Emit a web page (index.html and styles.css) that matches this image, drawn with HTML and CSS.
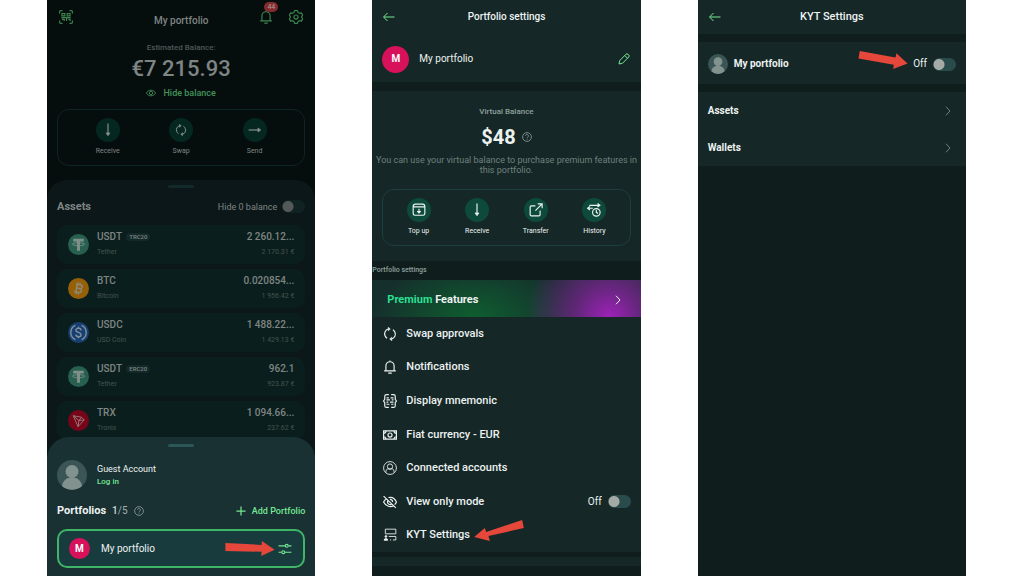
FILE: index.html
```html
<!DOCTYPE html>
<html lang="en">
<head>
    <meta charset="UTF-8">
    <meta name="viewport" content="width=device-width, initial-scale=1.0">
    <title>KYT Settings</title>
    <link rel="stylesheet" href="styles.css">
</head>
<body>
    <!-- Shared icons -->
    <svg class="sprite" aria-hidden="true">
        <symbol id="i-down" viewBox="0 0 24 24"><path d="M12 1v18" /><path d="M8.500 17h7L12 22z" fill="currentColor" stroke-width="1" /></symbol>
        <symbol id="i-right" viewBox="0 0 24 24"><path d="M1 12h18" /><path d="M17 8.500v7l5-3.500z" fill="currentColor" stroke-width="1" /></symbol>
        <symbol id="i-swap" viewBox="0 0 24 24"><path d="M9 3.500C4 5 1.500 10 3.500 15c.7 1.700 2 3.400 3.500 4.400M15 20.500c5-1.500 7.500-6.500 5.500-11.500-.7-1.700-2-3.400-3.500-4.400" /><path d="M9 .5v6l3.500-3zM15 17.500v6l-3.500-3z" fill="currentColor" stroke-width="1" /></symbol>
        <symbol id="i-bell" viewBox="0 0 24 24"><path d="M5 18v-8a7 7 0 0 1 14 0v8M2 18.500h20M9 22.500h6M12 1v2" /></symbol>
        <symbol id="i-back" viewBox="0 0 24 20"><path d="M23 10H2M9 2l-8 8 8 8" /></symbol>
        <symbol id="i-chevron" viewBox="0 0 12 20"><path d="M2 1.500l8 8.500-8 8.500" /></symbol>
        <symbol id="i-help" viewBox="0 0 24 24"><circle cx="12" cy="12" r="10.500" /><path d="M8.500 9.500a3.500 3.500 0 1 1 5.500 2.800c-1.300 1-2 1.500-2 3M12 17v1.500" /></symbol>
        <symbol id="i-user" viewBox="0 0 30 30"><circle cx="15" cy="15" r="15" fill="#3b5556" stroke="none" /><path d="M5 26c1-6 5-8.500 10-8.500S24 20 25 26a15 15 0 0 1-20 0z" fill="#82938f" stroke="none" /><circle cx="15" cy="11.500" r="6.500" fill="#82938f" stroke="none" /></symbol>
        <symbol id="i-tether" viewBox="0 0 24 24"><circle cx="12" cy="12" r="12" fill="#28604f" stroke="none" /><path d="M6 5.500h12v3.200h-4.300V19h-3.400V8.700H6z" fill="#7f8f8b" stroke="none" /><ellipse cx="12" cy="11.600" rx="7" ry="1.700" fill="none" stroke="#7f8f8b" stroke-width="1" /></symbol>
    </svg>

    <main class="screens">
        <section class="phone phone-home">
            <header class="home-bar">
                <button class="icon-btn" aria-label="Scan QR">
                    <svg class="icon icon-m" viewBox="0 0 24 24"><path d="M1 6V3q0-2 2-2h3M18 1h3q2 0 2 2v3M23 18v3q0 2-2 2h-3M6 23H3q-2 0-2-2v-3M5 6h5v4H5zM14 6h5v4h-5zM4 13h16M5 16h4v3M13 13v6M16 16h3v3" /></svg>
                </button>
                <h1>My portfolio</h1>
                <div class="home-tools">
                    <button class="icon-btn bell" aria-label="Notifications">
                        <svg class="icon icon-m"><use href="#i-bell" /></svg>
                        <span class="badge">44</span>
                    </button>
                    <button class="icon-btn" aria-label="Settings">
                        <svg class="icon icon-m" viewBox="0 0 24 24"><path d="M9.500 1h5l1 3.200 2.500 1.500 3.300-.8 2.200 4-2.200 3.100 2.200 3.100-2.200 4-3.300-.8-2.500 1.500-1 3.200h-5l-1-3.200L6 18.300l-3.300.8-2.200-4L2.700 12 .5 8.900l2.200-4 3.300.8 2.500-1.500z" stroke-linejoin="round" /><circle cx="12" cy="12" r="3.500" /></svg>
                    </button>
                </div>
            </header>

            <div class="balance">
                <p class="balance-label">Estimated Balance:</p>
                <p class="balance-sum">€7 215.93</p>
                <button class="hide-balance">
                    <svg class="icon icon-xs" viewBox="0 0 24 16"><path d="M1 8c4-9 18-9 22 0-4 9-18 9-22 0z" /><circle cx="12" cy="8" r="4" /></svg>
                    Hide balance
                </button>
            </div>

            <nav class="actions">
                <button class="action"><span class="action-dot"><svg class="icon icon-m"><use href="#i-down" /></svg></span>Receive</button>
                <button class="action"><span class="action-dot"><svg class="icon icon-s"><use href="#i-swap" /></svg></span>Swap</button>
                <button class="action"><span class="action-dot"><svg class="icon icon-m"><use href="#i-right" /></svg></span>Send</button>
            </nav>

            <div class="assets">
                <span class="handle"></span>
                <div class="assets-head">
                    <h2>Assets</h2>
                    <label for="hide-zero">Hide 0 balance</label>
                    <input type="checkbox" class="switch" id="hide-zero">
                </div>
                <ul class="asset-list">
                    <li class="asset">
                        <svg class="coin"><use href="#i-tether" /></svg>
                        <div class="asset-name"><b>USDT <span class="tag">TRC20</span></b><small>Tether</small></div>
                        <div class="asset-sum"><b>2 260.12...</b><small>2 170.31 €</small></div>
                    </li>
                    <li class="asset">
                        <svg class="coin" viewBox="0 0 24 24"><circle cx="12" cy="12" r="12" fill="#966008" /><path d="M9 7l6 1q2 1 1 3-1 1.500-3 1l-3.500-.5M13 12q3 1 2.300 3-.8 2-3.300 1.500l-5-1M10.500 7.500L9 16M11.500 5l-.4 2M14 5.500l-.4 2M9.500 16.500l-.4 2M12 17l-.4 2" fill="none" stroke="#8d8778" stroke-width="1.700" /></svg>
                        <div class="asset-name"><b>BTC</b><small>Bitcoin</small></div>
                        <div class="asset-sum"><b>0.020854...</b><small>1 956.42 €</small></div>
                    </li>
                    <li class="asset">
                        <svg class="coin" viewBox="0 0 24 24"><circle cx="12" cy="12" r="12" fill="#173f70" /><path d="M8.500 3.800a9 9 0 0 0 0 16.400M15.500 3.800a9 9 0 0 1 0 16.400M15 9.500c-.3-3-6-3-6-.2 0 3.200 6 1.800 6 5.200 0 3-5.700 3-6 0M12 5.500V7M12 17v1.700" fill="none" stroke="#8290a0" stroke-width="1.600" /></svg>
                        <div class="asset-name"><b>USDC</b><small>USD Coin</small></div>
                        <div class="asset-sum"><b>1 488.22...</b><small>1 429.13 €</small></div>
                    </li>
                    <li class="asset">
                        <svg class="coin"><use href="#i-tether" /></svg>
                        <div class="asset-name"><b>USDT <span class="tag">ERC20</span></b><small>Tether</small></div>
                        <div class="asset-sum"><b>962.1</b><small>923.87 €</small></div>
                    </li>
                    <li class="asset">
                        <svg class="coin" viewBox="0 0 24 24"><circle cx="12" cy="12" r="12" fill="#77051a" /><path d="M6 6.500l9.500 1.800 3 3L11.500 19zM6 6.500l6.500 5.500L11.500 19M12.500 12l6-.7M12.500 12l3-3.700" fill="none" stroke="#9b8080" stroke-width="1" stroke-linejoin="round" /></svg>
                        <div class="asset-name"><b>TRX</b><small>Tronix</small></div>
                        <div class="asset-sum"><b>1 094.66...</b><small>237.62 €</small></div>
                    </li>
                </ul>
            </div>

            <!-- Account sheet over the home screen -->
            <div class="sheet">
                <span class="handle"></span>
                <div class="account">
                    <svg class="avatar-l"><use href="#i-user" /></svg>
                    <div>
                        <p>Guest Account</p>
                        <a href="#">Log in</a>
                    </div>
                </div>
                <div class="portfolios-head">
                    <h2>Portfolios</h2>
                    <span class="count"><b>1</b>/5</span>
                    <svg class="icon icon-xs muted"><use href="#i-help" /></svg>
                    <button class="add">
                        <svg class="icon icon-xs" viewBox="0 0 24 24"><path d="M12 1v22M1 12h22" stroke-width="3" /></svg>
                        Add Portfolio
                    </button>
                </div>
                <div class="portfolio-card">
                    <span class="letter letter-s">M</span>
                    <span>My portfolio</span>
                    <svg class="pointer pointer-flat" viewBox="556 343 151 46"><path d="M556 349l111 6 1-12 39 27-41 19 1-13-111-2z" /></svg>
                    <button class="icon-btn" aria-label="Portfolio settings">
                        <svg class="icon icon-m" viewBox="0 0 24 24"><path d="M1 6.500h11M18 6.500h5M1 17.500h5M12 17.500h11" /><circle cx="15" cy="6.500" r="2.500" /><circle cx="9" cy="17.500" r="2.500" /></svg>
                    </button>
                </div>
            </div>
        </section>

        <section class="phone phone-settings">
            <header class="bar">
                <a href="#" class="back" aria-label="Back"><svg class="icon"><use href="#i-back" /></svg></a>
                <h1>Portfolio settings</h1>
            </header>
            <div class="profile">
                <span class="letter letter-l">M</span>
                <span>My portfolio</span>
                <button class="icon-btn" aria-label="Edit name">
                    <svg class="icon icon-s" viewBox="0 0 24 24"><path d="M2 22l1.500-7L16 2.500q2-2 4 0l1.500 1.500q2 2 0 4L9 20.500zM13.500 5l5.500 5.500" /></svg>
                </button>
            </div>

            <div class="virtual">
                <p class="virtual-label">Virtual Balance</p>
                <p class="virtual-sum">$48 <svg class="icon icon-xs muted"><use href="#i-help" /></svg></p>
                <p class="virtual-note">You can use your virtual balance to purchase premium features in this portfolio.</p>
                <nav class="actions">
                    <button class="action"><span class="action-dot"><svg class="icon icon-m" viewBox="0 0 24 24"><path d="M2 6q0-4 4-4h12q4 0 4 4v12q0 3-3 3H5q-3 0-3-3zM2 6.500h20M12 10v6M9 14l3 3 3-3" /></svg></span>Top up</button>
                    <button class="action"><span class="action-dot"><svg class="icon icon-m"><use href="#i-down" /></svg></span>Receive</button>
                    <button class="action"><span class="action-dot"><svg class="icon icon-m" viewBox="0 0 24 24"><path d="M11 5H4q-2 0-2 2v13q0 2 2 2h13q2 0 2-2v-7M11 13L22 2M15 1.500h7.500V9" /></svg></span>Transfer</button>
                    <button class="action"><span class="action-dot"><svg class="icon icon-m" viewBox="0 0 24 24"><path d="M4 4h18M18 1l4 3-4 3M1 9h9M5 6L1 9l4 3" /><circle cx="16" cy="16" r="6.500" /><path d="M16 12v4l3 2" /></svg></span>History</button>
                </nav>
            </div>

            <h2 class="group-title">Portfolio settings</h2>
            <a href="#" class="premium">
                <span><em>Premium</em> Features</span>
                <svg class="icon chevron"><use href="#i-chevron" /></svg>
            </a>
            <ul class="menu">
                <li><a href="#"><svg class="icon icon-m"><use href="#i-swap" /></svg>Swap approvals</a></li>
                <li><a href="#"><svg class="icon icon-m"><use href="#i-bell" /></svg>Notifications</a></li>
                <li><a href="#"><svg class="icon icon-m" viewBox="0 0 24 24"><path d="M10 1H6Q3 1 3 4v5l-2 3 2 3v5q0 3 3 3h4M14 1h4q3 0 3 3v5l2 3-2 3v5q0 3-3 3h-4M6 6.500h4M13 6.500h5M6 10h6M15 10h3M6 14h3M12 14h6M6 17.500h5M14 17.500h4" /></svg>Display mnemonic</a></li>
                <li><a href="#"><svg class="icon icon-m" viewBox="0 0 24 24"><path d="M1 5h22v14H1zM1 9q4 0 4-4M23 9q-4 0-4-4M1 15q4 0 4 4M23 15q-4 0-4 4" /><circle cx="12" cy="12" r="3.500" /></svg>Fiat currency - EUR</a></li>
                <li><a href="#"><svg class="icon icon-m thin" viewBox="0 0 24 24"><circle cx="12" cy="12" r="11" /><circle cx="12" cy="9.500" r="4.500" /><path d="M5 20c0-7 3-7 7-6 4-1 7-1 7 6" /></svg>Connected accounts</a></li>
                <li>
                    <svg class="icon icon-m" viewBox="0 0 24 24"><path d="M1 2l21 20M6 6.500Q3 8.500 1 12c4 8 12 9.500 17 6M9.500 4.500c5-1.500 10.500 1 13.500 7.500q-1 2.500-3 4.500M8.500 9.500a4.500 4.500 0 0 0 6.500 6M12 7.500q4 0 4.500 4.500" /></svg>
                    <label for="view-only">View only mode</label>
                    <span class="state">Off</span>
                    <input type="checkbox" class="switch" id="view-only">
                </li>
                <li>
                    <a href="#"><svg class="icon icon-m thin" viewBox="0 0 24 24"><path d="M4 10V2h18v8H4M10 14.500h12v6M12 20.500h2M17 20.500h5" /><circle cx="5" cy="14.500" r="1.500" fill="currentColor" /><path d="M2 21q0-3 3-3t3 3z" fill="currentColor" /></svg>KYT Settings</a>
                    <svg class="pointer pointer-up" viewBox="325 237 149 63"><path d="M469 237l5 24-106 24 4 15-47-12 32-27 4 12z" /></svg>
                </li>
            </ul>
            <div class="next-group"></div>
        </section>

        <section class="phone phone-kyt">
            <header class="bar">
                <a href="#" class="back" aria-label="Back"><svg class="icon"><use href="#i-back" /></svg></a>
                <h1>KYT Settings</h1>
            </header>
            <div class="kyt-profile">
                <svg class="avatar-s"><use href="#i-user" /></svg>
                <label for="kyt-on">My portfolio</label>
                <svg class="pointer pointer-down" viewBox="498 153 150 55"><path d="M502 153l109 20 3-13 34 31-44 17 2-13-108-19z" /></svg>
                <span class="state">Off</span>
                <input type="checkbox" class="switch" id="kyt-on">
            </div>
            <ul class="kyt-list">
                <li><a href="#">Assets <svg class="icon chevron"><use href="#i-chevron" /></svg></a></li>
                <li><a href="#">Wallets <svg class="icon chevron"><use href="#i-chevron" /></svg></a></li>
            </ul>
        </section>
    </main>
</body>
</html>
```
FILE: styles.css
```css
* {
    box-sizing: border-box;
}
body {
    margin: 0;
    background-color: #fff;
    font-family: Roboto, "Liberation Sans", sans-serif;
    font-size: 10px;
    line-height: 12px;
    color: #edf2f1;
}
h1, h2, p, ul {
    margin: 0;
    padding: 0;
}
ul {
    list-style: none;
}
a {
    color: inherit;
    text-decoration: none;
}
button {
    padding: 0;
    border: none;
    background: none;
    font: inherit;
    color: inherit;
    cursor: pointer;
}
.sprite {
    position: absolute;
    width: 0;
    height: 0;
}

/* Icons */
.icon {
    flex: none;
    display: block;
    fill: none;
    stroke: currentColor;
    stroke-width: 2;
}
.icon-xs {
    width: 10px;
    height: 10px;
}
.icon-s {
    width: 12px;
    height: 12px;
}
.icon-m {
    width: 14px;
    height: 14px;
}
.thin {
    stroke-width: 1.5;
}
.muted {
    color: #8f9c9b;
}
.icon-btn {
    display: block;
    color: #74e892;
}
.chevron {
    width: 6px;
    height: 10px;
}
.pointer {
    flex: none;
    width: 50px;
    fill: #e5473a;
}
.pointer-flat {
    height: 15px;
    margin-left: auto;
    margin-right: 3px;
}
.pointer-up {
    height: 21px;
    margin: 0 0 10px 4px;
}
.pointer-down {
    height: 18px;
    margin: 0 5px 8px auto;
}

/* Screens */
.screens {
    display: grid;
    grid-template-columns: repeat(3, 1fr);
    gap: 57px;
    height: 100vh;
    padding: 0 58px 0 47px;
}
.phone {
    display: flex;
    flex-direction: column;
    min-width: 0;
    overflow: hidden;
    background-color: #0f1e1d;
}
.switch {
    appearance: none;
    flex: none;
    width: 23px;
    height: 13px;
    margin: 0;
    border-radius: 7px;
    background: radial-gradient(circle at 6px 50%, #a5aaa7 5px, #294b4b 6px);
}
.letter {
    flex: none;
    display: grid;
    place-items: center;
    border-radius: 50%;
    background-color: #d8115b;
    color: #fff;
    font-weight: 700;
}
.letter-s {
    width: 21px;
    height: 21px;
}
.letter-l {
    width: 27px;
    height: 27px;
}
.handle {
    display: block;
    width: 26px;
    height: 3px;
    margin: 0 auto;
    border-radius: 2px;
    background-color: #2b5758;
}
.actions {
    display: flex;
    padding: 8px 6px;
    border: 1px solid #1e3d41;
    border-radius: 12px;
}
.action {
    flex: 1;
    display: flex;
    flex-direction: column;
    align-items: center;
    gap: 3px;
    font-size: 7px;
    line-height: 12px;
}
.action-dot {
    display: grid;
    place-items: center;
    width: 24px;
    height: 24px;
    border-radius: 50%;
    background-color: #0d4a3b;
}

/* Home, dimmed behind the sheet */
.phone-home {
    position: relative;
    background-color: #060e0d;
    color: #7f8584;
}
.home-bar {
    display: grid;
    grid-template-columns: 1fr auto 1fr;
    align-items: start;
    padding: 10px 12px 0;
}
.home-bar h1 {
    padding-top: 5px;
    font-size: 10px;
    font-weight: 500;
}
.home-bar .icon-btn {
    color: #3b8450;
}
.home-tools {
    display: flex;
    justify-content: flex-end;
    gap: 16px;
}
.bell {
    position: relative;
}
.badge {
    position: absolute;
    top: -8px;
    left: 5px;
    width: 14px;
    border-radius: 5px;
    background-color: #842b2d;
    color: #a9a1a1;
    font-size: 7px;
    line-height: 10px;
}
.balance {
    display: flex;
    flex-direction: column;
    align-items: center;
    padding-top: 15px;
}
.balance-label {
    color: #4f5857;
    font-size: 8px;
    font-weight: 500;
}
.balance-sum {
    margin: 3px 0;
    font-size: 22px;
    font-weight: 500;
    line-height: 24px;
}
.hide-balance {
    display: flex;
    align-items: center;
    gap: 7px;
    margin: 3px 0 10px;
    color: #43935b;
    font-size: 9px;
    font-weight: 500;
}
.phone-home .actions {
    margin: 0 10px;
    padding-right: 13px;
    padding-left: 13px;
    border-color: #0e2323;
}
.phone-home .action-dot {
    background-color: #04281f;
    color: #8a9190;
}
.assets {
    flex: 1;
    margin-top: 14px;
    padding: 5px 10px 0;
    border-radius: 20px 20px 0 0;
    background-color: #0b1718;
}
.assets .handle {
    background-color: #122b2a;
}
.assets-head {
    display: flex;
    align-items: center;
    padding: 12px 0;
    font-size: 9px;
}
.assets-head h2 {
    flex: 1;
    font-size: 11px;
    font-weight: 700;
}
.assets-head .switch {
    margin-left: 5px;
    background: radial-gradient(circle at 6px 50%, #545857 5px, #102322 6px);
}
.asset-list {
    display: grid;
    gap: 5px;
}
.asset {
    display: flex;
    align-items: center;
    height: 39px;
    padding: 0 11px;
    border-radius: 10px;
    background-color: #0a1f1d;
}
.coin {
    width: 21px;
    height: 21px;
    margin-right: 8px;
}
.asset-name {
    flex: 1;
}
.asset-sum {
    text-align: right;
}
.asset b {
    display: block;
    font-size: 10px;
    font-weight: 500;
}
.asset small {
    display: block;
    margin-top: 3px;
    color: #46524f;
    font-size: 7px;
}
.tag {
    display: inline-block;
    margin-left: 2px;
    padding: 0 3px;
    border-radius: 4px;
    background-color: #122927;
    font-size: 6px;
    line-height: 8px;
    vertical-align: 1px;
}

/* Sheet */
.sheet {
    position: absolute;
    right: 0;
    bottom: 0;
    left: 0;
    padding: 7px 10px 8px;
    border-radius: 22px 22px 0 0;
    background-color: #193133;
    color: #edf2f1;
}
.account {
    display: flex;
    align-items: center;
    gap: 10px;
    padding: 13px 0;
    font-size: 9px;
}
.account a {
    display: block;
    margin-top: 1px;
    color: #74e892;
    font-size: 8px;
    font-weight: 500;
}
.avatar-l {
    width: 30px;
    height: 30px;
}
.portfolios-head {
    display: flex;
    align-items: center;
    gap: 6px;
    margin: 2px 0 12px;
}
.portfolios-head h2 {
    font-size: 11px;
    font-weight: 700;
}
.count {
    color: #a3b0af;
}
.count b {
    color: #d5dcdb;
    font-weight: 500;
}
.add {
    display: flex;
    align-items: center;
    gap: 6px;
    margin-left: auto;
    color: #74e892;
    font-size: 9px;
    font-weight: 500;
}
.portfolio-card {
    display: flex;
    align-items: center;
    height: 39px;
    padding: 0 11px 0 10px;
    border: 2px solid #3fb568;
    border-radius: 10px;
    background-color: #183c3e;
}
.portfolio-card .letter {
    margin-right: 11px;
}

/* Portfolio settings */
.bar {
    display: grid;
    grid-template-columns: 14px 1fr 14px;
    align-items: center;
    height: 34px;
    padding: 0 10px;
    background-color: #152827;
}
.bar h1 {
    font-size: 10px;
    font-weight: 500;
    text-align: center;
}
.back {
    color: #74e892;
}
.back .icon {
    width: 14px;
    height: 10px;
}
.profile {
    display: flex;
    align-items: center;
    gap: 10px;
    height: 48px;
    padding: 2px 11px 0 10px;
    background-color: #152827;
}
.profile .icon-btn {
    margin-left: auto;
}
.virtual {
    margin-top: 9px;
    padding: 15px 10px;
    background-color: #152827;
    text-align: center;
}
.virtual-label {
    color: #91a09e;
    font-size: 8px;
    font-weight: 500;
}
.virtual-sum {
    display: flex;
    align-items: center;
    justify-content: center;
    gap: 6px;
    margin: 7px 0 6px;
    font-size: 20px;
    font-weight: 700;
    line-height: 24px;
}
.virtual-note {
    margin: 0 -8px 14px;
    color: #71807e;
    font-size: 9px;
    line-height: 10px;
}
.group-title {
    color: #93a09e;
    font-size: 7px;
    font-weight: 500;
    line-height: 19px;
}
.premium {
    display: flex;
    align-items: center;
    justify-content: space-between;
    height: 37px;
    padding: 2px 20px 0 15px;
    background:
        radial-gradient(circle at 88% 100%, #9d22b8, rgba(125, 35, 148, 0.7) 35px, rgba(90, 35, 110, 0) 82px),
        radial-gradient(ellipse 100px 62px at 38% 110%, #0e6030, rgba(14, 96, 48, 0)),
        #15302c;
    font-size: 11px;
    font-weight: 700;
}
.premium em {
    color: #2cdf92;
    font-style: normal;
}
.menu {
    flex: 1;
    display: flex;
    flex-direction: column;
    background-color: #152827;
    font-size: 11px;
    font-weight: 500;
}
.menu li {
    flex: 1;
    display: flex;
    align-items: center;
    min-height: 0;
    padding: 0 10px 0 11px;
}
.menu a {
    display: flex;
    align-items: center;
}
.menu .icon {
    margin-right: 9px;
}
.state {
    margin-left: auto;
    margin-right: 6px;
    font-size: 10px;
    font-weight: 400;
}
.next-group {
    height: 9px;
    margin: 5px 0 10px;
    background-color: #152827;
}

/* KYT */
.phone-kyt .bar h1 {
    font-size: 11px;
}
.kyt-profile {
    display: flex;
    align-items: center;
    height: 42px;
    margin: 8px 0;
    padding: 2px 10px 0;
    background-color: #152827;
    font-weight: 700;
}
.avatar-s {
    width: 20px;
    height: 20px;
    margin-right: 6px;
}
.kyt-profile .state {
    margin-left: 0;
}
.kyt-list {
    background-color: #152827;
    font-weight: 700;
}
.kyt-list a {
    display: flex;
    align-items: center;
    justify-content: space-between;
    height: 37px;
    padding: 0 15px 0 10px;
}
.kyt-list .chevron {
    color: #71807e;
}
```
